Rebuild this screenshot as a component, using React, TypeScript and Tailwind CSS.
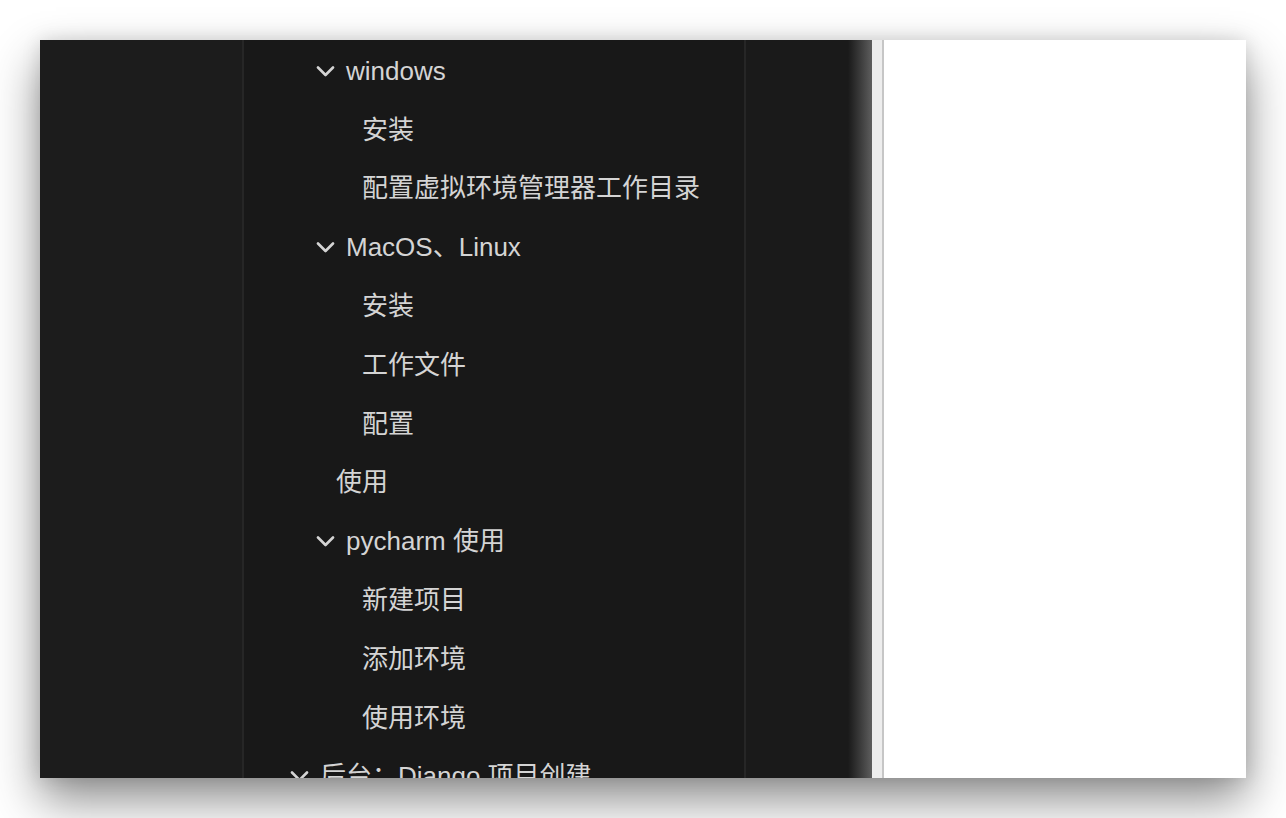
import React from "react";

type Item = { label: string; pad: string; folder?: boolean };

const items: Item[] = [
  { label: "windows", pad: "pl-[72px]", folder: true },
  { label: "安装", pad: "pl-[118px]" },
  { label: "配置虚拟环境管理器工作目录", pad: "pl-[118px]" },
  { label: "MacOS、Linux", pad: "pl-[72px]", folder: true },
  { label: "安装", pad: "pl-[118px]" },
  { label: "工作文件", pad: "pl-[118px]" },
  { label: "配置", pad: "pl-[118px]" },
  { label: "使用", pad: "pl-[92px]" },
  { label: "pycharm 使用", pad: "pl-[72px]", folder: true },
  { label: "新建项目", pad: "pl-[118px]" },
  { label: "添加环境", pad: "pl-[118px]" },
  { label: "使用环境", pad: "pl-[118px]" },
  { label: "后台：Django 项目创建", pad: "pl-[46px]", folder: true },
];

function Chevron() {
  return (
    <svg width="19" height="11" viewBox="0 0 19 11" className="mr-[11px] shrink-0">
      <polyline
        points="2,1.5 9.5,9 17,1.5"
        fill="none"
        stroke="#d4d4d4"
        strokeWidth="2.6"
        strokeLinecap="round"
        strokeLinejoin="round"
      />
    </svg>
  );
}

export default function App() {
  return (
    <div className="w-[1286px] h-[818px] bg-white p-[40px]">
      <div className="flex h-[738px] w-[1206px] overflow-hidden shadow-[0_22px_45px_rgba(0,0,0,0.45),0_0_18px_rgba(0,0,0,0.12)]">
        {/* left rail */}
        <div className="w-[204px] shrink-0 bg-[#1c1c1c] border-r-2 border-[#262626]" />

        {/* outline */}
        <div
          className="w-[502px] shrink-0 bg-[#181818] border-r-2 border-[#262626] pt-[2px] text-[26px] text-[#d4d4d4]"
          style={{ fontFamily: '"Liberation Sans", "Noto Sans CJK SC", sans-serif' }}
        >
          {items.map((it, i) => (
            <div key={i} className={`flex items-center h-[58.8px] whitespace-nowrap ${it.pad}`}>
              {it.folder && <Chevron />}
              <span>{it.label}</span>
            </div>
          ))}
        </div>

        {/* dark gutter fading out */}
        <div className="w-[126px] shrink-0 flex">
          <div className="flex-1 bg-[#1a1a1a]" />
          <div className="w-[24px] bg-gradient-to-r from-[#1a1a1a] to-[#5e5e5e]" />
        </div>

        {/* splitter */}
        <div className="w-[10px] shrink-0 bg-[#ededed]" />
        <div className="w-[2px] shrink-0 bg-[#c6c6c6]" />

        {/* editor */}
        <div className="flex-1 bg-white" />
      </div>
    </div>
  );
}
